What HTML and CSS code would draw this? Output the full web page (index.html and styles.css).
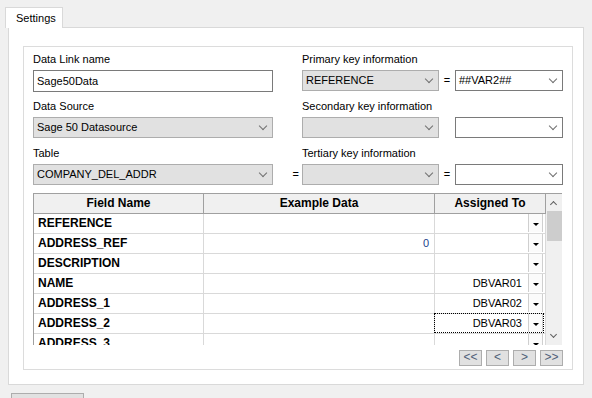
FILE: index.html
```html
<!DOCTYPE html>
<html lang="en">
<head>
    <meta charset="UTF-8">
    <title>Data Link Settings</title>
    <link rel="stylesheet" href="styles.css">
</head>
<body>
    <div class="tabs">
        <div class="tab">Settings</div>
    </div>
    <div class="panel">
        <div class="group">
            <div class="form">
                <div class="label">Data Link name</div>
                <div class="label wide">Primary key information</div>

                <div class="input">Sage50Data</div>
                <div></div>
                <div class="select">REFERENCE<span class="chev"></span></div>
                <div class="eq">=</div>
                <div class="select white">##VAR2##<span class="chev"></span></div>

                <div class="label">Data Source</div>
                <div class="label wide">Secondary key information</div>

                <div class="select">Sage 50 Datasource<span class="chev"></span></div>
                <div></div>
                <div class="select"><span class="chev"></span></div>
                <div></div>
                <div class="select white"><span class="chev"></span></div>

                <div class="label">Table</div>
                <div class="label wide">Tertiary key information</div>

                <div class="select">COMPANY_DEL_ADDR<span class="chev"></span></div>
                <div class="eq left">=</div>
                <div class="select"><span class="chev"></span></div>
                <div class="eq">=</div>
                <div class="select white"><span class="chev"></span></div>
            </div>

            <div class="grid">
                <div class="grid-table">
                    <div class="row head">
                        <div class="cell">Field Name</div>
                        <div class="cell">Example Data</div>
                        <div class="cell">Assigned To</div>
                    </div>
                    <div class="row">
                        <div class="cell name">REFERENCE</div>
                        <div class="cell num"></div>
                        <div class="cell assign"><span></span><i class="drop"></i></div>
                    </div>
                    <div class="row">
                        <div class="cell name">ADDRESS_REF</div>
                        <div class="cell num">0</div>
                        <div class="cell assign"><span></span><i class="drop"></i></div>
                    </div>
                    <div class="row">
                        <div class="cell name">DESCRIPTION</div>
                        <div class="cell num"></div>
                        <div class="cell assign"><span></span><i class="drop"></i></div>
                    </div>
                    <div class="row">
                        <div class="cell name">NAME</div>
                        <div class="cell num"></div>
                        <div class="cell assign"><span>DBVAR01</span><i class="drop"></i></div>
                    </div>
                    <div class="row">
                        <div class="cell name">ADDRESS_1</div>
                        <div class="cell num"></div>
                        <div class="cell assign"><span>DBVAR02</span><i class="drop"></i></div>
                    </div>
                    <div class="row">
                        <div class="cell name">ADDRESS_2</div>
                        <div class="cell num"></div>
                        <div class="cell assign focus"><span>DBVAR03</span><i class="drop"></i></div>
                    </div>
                    <div class="row">
                        <div class="cell name">ADDRESS_3</div>
                        <div class="cell num"></div>
                        <div class="cell assign"><span></span><i class="drop"></i></div>
                    </div>
                </div>
                <div class="vscroll">
                    <div class="arrow up"></div>
                    <div class="thumb"></div>
                    <div class="track"></div>
                    <div class="arrow down"></div>
                </div>
            </div>

            <div class="pager">
                <div class="pbtn">&lt;&lt;</div>
                <div class="pbtn">&lt;</div>
                <div class="pbtn">&gt;</div>
                <div class="pbtn">&gt;&gt;</div>
            </div>
        </div>
    </div>
    <div class="bottom-btn"></div>
</body>
</html>
```

FILE: styles.css
```css
body {
    margin: 0;
    background-color: #f0f0f0;
    font-family: "Liberation Sans", Arial, sans-serif;
    font-size: 11px;
    color: #000;
    overflow: hidden;
    height: 398px;
}

.tabs {
    padding: 7px 0 0 5px;
    height: 21px;
}

.tab {
    position: relative;
    z-index: 1;
    width: 58px;
    height: 21px;
    box-sizing: border-box;
    padding: 4px 0 0 10px;
    background-color: #fff;
    border: 1px solid #d9d9d9;
    border-bottom: none;
    line-height: 13px;
}

.panel {
    margin: -1px 8px 0 8px;
    height: 358px;
    box-sizing: border-box;
    background-color: #fff;
    border: 1px solid #d9d9d9;
    padding: 18px 0 0 14px;
}

.group {
    width: 550px;
    height: 324px;
    box-sizing: border-box;
    border: 1px solid #dcdcdc;
    padding: 5px 0 0 9px;
}

/* top form */
.form {
    display: grid;
    grid-template-columns: 240px 29px 137px 16px 108px;
    grid-template-rows: 18px 29px 18px 29px 18px 22px;
}

.label {
    line-height: 15px;
    height: 15px;
}

.label.wide {
    grid-column: 3 / -1;
}

.input,
.select {
    box-sizing: border-box;
    height: 22px;
    line-height: 20px;
    padding-left: 3px;
    border: 1px solid #7a7a7a;
    background-color: #fff;
    white-space: nowrap;
}

.select {
    position: relative;
    height: 21px;
    line-height: 19px;
    background-color: #e1e1e1;
    border-color: #adadad;
}

.select.white {
    background-color: #fff;
    border-color: #7a7a7a;
}

.chev {
    position: absolute;
    right: 6px;
    top: 5px;
    width: 5px;
    height: 5px;
    border-right: 1px solid #707070;
    border-bottom: 1px solid #707070;
    transform: rotate(45deg);
}

.eq {
    text-align: center;
    line-height: 21px;
}

.eq.left {
    text-align: right;
    padding-right: 3px;
}

/* data grid */
.grid {
    display: flex;
    width: 529px;
    height: 152px;
    margin-top: 7px;
    overflow: hidden;
    border-left: 1px solid #a0a0a0;
    box-sizing: border-box;
}

.grid-table {
    width: 512px;
}

.row {
    display: grid;
    grid-template-columns: 170px 231px 111px;
    height: 20px;
}

.cell {
    box-sizing: border-box;
    border-right: 1px solid #d9d9d9;
    border-bottom: 1px solid #d9d9d9;
    line-height: 19px;
    white-space: nowrap;
    overflow: hidden;
}

.row.head {
    height: 21px;
    background-color: #f0f0f0;
}

.row.head .cell {
    border-top: 1px solid #a0a0a0;
    border-bottom: 1px solid #a0a0a0;
    border-right-color: #a0a0a0;
    text-align: center;
    font-weight: bold;
    font-size: 12px;
}

.cell.name {
    padding-left: 4px;
    font-weight: bold;
    font-size: 12px;
}

.cell.num {
    text-align: right;
    padding-right: 5px;
    color: #1b3f8b;
}

.cell.assign {
    display: flex;
    justify-content: flex-end;
    padding-right: 2px;
}

.drop {
    position: relative;
    width: 15px;
    height: 18px;
    margin-left: 6px;
    box-sizing: border-box;
    background-color: #fbfbfb;
    border-left: 1px solid #cfcfcf;
    border-right: 1px solid #cfcfcf;
}

.drop::after {
    content: "";
    position: absolute;
    left: 4px;
    top: 9px;
    border-left: 3px solid transparent;
    border-right: 3px solid transparent;
    border-top: 3px solid #000;
}

.cell.focus {
    position: relative;
    overflow: visible;
}

.cell.focus::after {
    content: "";
    position: absolute;
    left: -1px;
    top: -1px;
    right: 1px;
    bottom: 0;
    border: 1px dotted #000;
}

.vscroll {
    display: flex;
    flex-direction: column;
    width: 16px;
    background-color: #f0f0f0;
    border-top: 1px solid #a0a0a0;
}

.arrow {
    position: relative;
    height: 17px;
}

.arrow::after {
    content: "";
    position: absolute;
    left: 5px;
    width: 4px;
    height: 4px;
    border-left: 1px solid #606060;
    border-top: 1px solid #606060;
}

.arrow.up::after {
    top: 8px;
    transform: rotate(45deg);
}

.arrow.down::after {
    top: 4px;
    transform: rotate(225deg);
}

.thumb {
    height: 30px;
    margin: 0 0 0 1px;
    background-color: #cdcdcd;
}

.track {
    flex: 1;
}

/* paging buttons */
.pager {
    display: flex;
    justify-content: flex-end;
    gap: 4px;
    width: 530px;
    margin-top: 5px;
}

.pbtn {
    width: 23px;
    height: 16px;
    box-sizing: border-box;
    background-color: #e1e1e1;
    border: 1px solid #adadad;
    text-align: center;
    line-height: 13px;
    font-size: 12px;
    color: #4f5f78;
}

.bottom-btn {
    margin: 8px 0 0 11px;
    width: 73px;
    height: 6px;
    box-sizing: border-box;
    background-color: #e1e1e1;
    border: 1px solid #adadad;
    border-bottom: none;
}
```
